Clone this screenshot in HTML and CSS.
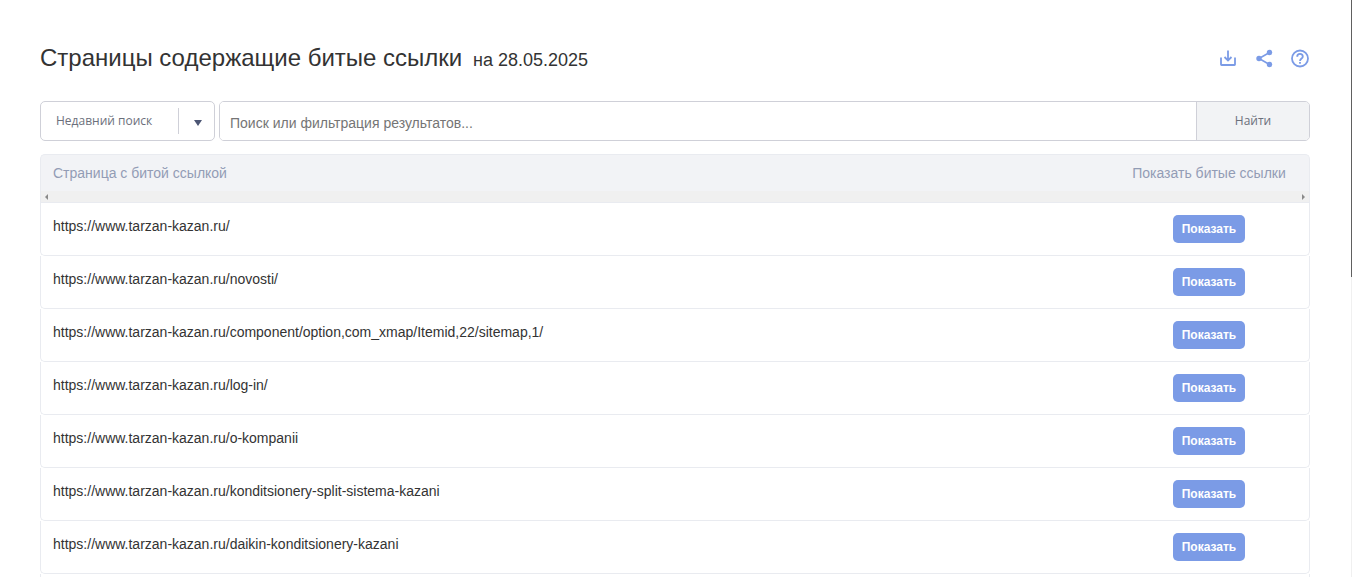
FILE: index.html
```
<!DOCTYPE html>
<html lang="ru">
<head>
    <meta charset="UTF-8">
    <title>Страницы содержащие битые ссылки</title>
    <link rel="stylesheet" href="styles.css">
</head>
<body>
    <div class="page">
        <div class="header">
            <h1>Страницы содержащие битые ссылки <span class="date">на 28.05.2025</span></h1>
            <div class="actions">
                <button type="button" class="icon-btn" aria-label="Скачать">
                    <svg width="20" height="20" viewBox="0 0 20 20" fill="none" stroke="currentColor" stroke-width="2">
                        <path d="M3 9.500v7q0 .5.500.5h13q.5 0 .5-.5v-7" stroke-width="1.800"/>
                        <path d="M10 2.500v9.500M6.500 9l3.500 3.500L13.500 9" stroke-width="1.800"/>
                    </svg>
                </button>
                <button type="button" class="icon-btn" aria-label="Поделиться">
                    <svg width="20" height="20" viewBox="0 0 20 20" fill="currentColor">
                        <path d="M15.500 4.500L5 10.500l10.500 6" fill="none" stroke="currentColor" stroke-width="1.600"/>
                        <circle cx="15.500" cy="4.500" r="2.700"/>
                        <circle cx="5" cy="10.500" r="2.700"/>
                        <circle cx="15.500" cy="16.500" r="2.700"/>
                    </svg>
                </button>
                <button type="button" class="icon-btn" aria-label="Помощь">
                    <svg width="20" height="20" viewBox="0 0 20 20" fill="none" stroke="currentColor" stroke-width="1.800">
                        <circle cx="10" cy="10.500" r="8"/>
                        <path d="M7.200 8.700a2.800 2.800 0 0 1 5.600 0c0 1.800-2.800 2-2.800 4.300"/>
                        <path d="M10 14v1.800"/>
                    </svg>
                </button>
            </div>
        </div>

        <form class="search">
            <div class="recent">
                <select class="recent-select" aria-label="Недавний поиск">
                    <option>Недавний поиск</option>
                </select>
                <svg class="recent-arrow" width="8" height="6" viewBox="0 0 8 6"><path d="M0 0h8L4 6z" fill="#4c5674"/></svg>
            </div>
            <div class="search-group">
                <input type="text" class="search-input" aria-label="Поиск" placeholder="Поиск или фильтрация результатов...">
                <button type="button" class="search-btn">Найти</button>
            </div>
        </form>

        <table class="links-table">
            <thead>
                <tr class="head-row">
                    <th>Страница с битой ссылкой</th>
                    <th class="action">Показать битые ссылки</th>
                </tr>
                <tr>
                    <td class="scroll-cell" colspan="2">
                        <div class="scroll-track">
                            <svg width="3" height="6" viewBox="0 0 3 6"><path d="M3 0v6L0 3z" fill="#8a8a8a"/></svg>
                            <svg width="3" height="6" viewBox="0 0 3 6"><path d="M0 0v6l3-3z" fill="#8a8a8a"/></svg>
                        </div>
                    </td>
                </tr>
            </thead>
            <tbody>
                <tr>
                    <td>https://www.tarzan-kazan.ru/</td>
                    <td class="action"><button type="button" class="show-btn">Показать</button></td>
                </tr>
                <tr>
                    <td>https://www.tarzan-kazan.ru/novosti/</td>
                    <td class="action"><button type="button" class="show-btn">Показать</button></td>
                </tr>
                <tr>
                    <td>https://www.tarzan-kazan.ru/component/option,com_xmap/Itemid,22/sitemap,1/</td>
                    <td class="action"><button type="button" class="show-btn">Показать</button></td>
                </tr>
                <tr>
                    <td>https://www.tarzan-kazan.ru/log-in/</td>
                    <td class="action"><button type="button" class="show-btn">Показать</button></td>
                </tr>
                <tr>
                    <td>https://www.tarzan-kazan.ru/o-kompanii</td>
                    <td class="action"><button type="button" class="show-btn">Показать</button></td>
                </tr>
                <tr>
                    <td>https://www.tarzan-kazan.ru/konditsionery-split-sistema-kazani</td>
                    <td class="action"><button type="button" class="show-btn">Показать</button></td>
                </tr>
                <tr>
                    <td>https://www.tarzan-kazan.ru/daikin-konditsionery-kazani</td>
                    <td class="action"><button type="button" class="show-btn">Показать</button></td>
                </tr>
                <tr>
                    <td></td>
                    <td class="action"></td>
                </tr>
            </tbody>
        </table>
    </div>
    <div class="page-scroll"><div class="page-thumb"></div></div>
</body>
</html>
```
FILE: styles.css
```
* {
    box-sizing: border-box;
}
body {
    margin: 0;
    background-color: #fff;
    color: #333;
    font-family: "Liberation Sans", Arial, sans-serif;
    font-size: 14px;
}
button,
input,
select {
    font-family: inherit;
}
.page {
    height: 100vh;
    padding: 40px 42px 0 40px;
    overflow: hidden;
}
.header {
    display: flex;
    align-items: center;
    justify-content: space-between;
    height: 36px;
}
.header h1 {
    margin: 0;
    font-size: 24px;
    font-weight: normal;
}
.date {
    margin-left: 4px;
    font-size: 18px;
}
.actions {
    display: flex;
    gap: 16px;
}
.icon-btn {
    display: flex;
    padding: 0;
    border: 0;
    background: none;
    color: #7b9be6;
}
.search {
    display: flex;
    gap: 4px;
    margin: 25px 0 13px;
}
.recent {
    position: relative;
    width: 175px;
}
.recent-select {
    appearance: none;
    width: 100%;
    height: 40px;
    padding: 0 15px 2px;
    border: 1px solid #cfd0d8;
    border-radius: 5px;
    background: linear-gradient(#cfd0d8, #cfd0d8) 137px 6px / 1px 26px no-repeat #fff;
    color: #6b6f7b;
    font-family: "Open Sans", sans-serif;
    font-size: 12px;
}
.recent-arrow {
    position: absolute;
    top: 19px;
    right: 13px;
    pointer-events: none;
}
.search-group {
    display: flex;
    flex: 1;
    height: 40px;
    border: 1px solid #cfd0d8;
    border-radius: 5px;
    overflow: hidden;
}
.search-input {
    flex: 1;
    padding: 4px 10px 0;
    border: 0;
    font-size: 14px;
}
.search-input::placeholder {
    color: #757575;
}
.search-btn {
    width: 113px;
    padding: 0 0 2px;
    border: 0;
    border-left: 1px solid #cfd0d8;
    background-color: #f2f3f5;
    color: #6b6f7b;
    font-family: "Open Sans", sans-serif;
    font-size: 12px;
}
.links-table {
    width: 100%;
    border-collapse: separate;
    border-spacing: 0;
    table-layout: fixed;
}
.links-table th {
    height: 37px;
    padding: 0 12px;
    border-top: 1px solid #e9ebf0;
    background-color: #f2f3f6;
    color: #929cb5;
    font-weight: normal;
    text-align: left;
}
.links-table th:first-child {
    border-left: 1px solid #e9ebf0;
    border-top-left-radius: 5px;
}
.links-table th:last-child {
    border-right: 1px solid #e9ebf0;
    border-top-right-radius: 5px;
}
.links-table .action {
    width: 201px;
    padding-left: 0;
    padding-right: 0;
    text-align: center;
}
.scroll-cell {
    padding: 0;
    border: 1px solid #e9ebf0;
    border-top: 0;
}
.scroll-track {
    display: flex;
    align-items: center;
    justify-content: space-between;
    height: 11px;
    padding: 0 4px;
    background-color: #f0f0f0;
}
.links-table tbody td {
    height: 53px;
    padding: 15px 12px 0;
    border-bottom: 1px solid #e9ebf0;
    vertical-align: top;
}
.links-table tbody td:first-child {
    border-left: 1px solid #e9ebf0;
    border-bottom-left-radius: 5px;
}
.links-table tbody td:last-child {
    padding: 12px 0 0;
    border-right: 1px solid #e9ebf0;
    border-bottom-right-radius: 5px;
}
.show-btn {
    width: 72px;
    height: 28px;
    padding: 0;
    border: 0;
    border-radius: 5px;
    background-color: #7b9be6;
    color: #fff;
    font-size: 12px;
    font-weight: bold;
}
.page-scroll {
    position: fixed;
    top: 0;
    right: 0;
    width: 1px;
    height: 100%;
    background-color: #f0f0f0;
}
.page-thumb {
    height: 48%;
    background-color: #606060;
}
```
